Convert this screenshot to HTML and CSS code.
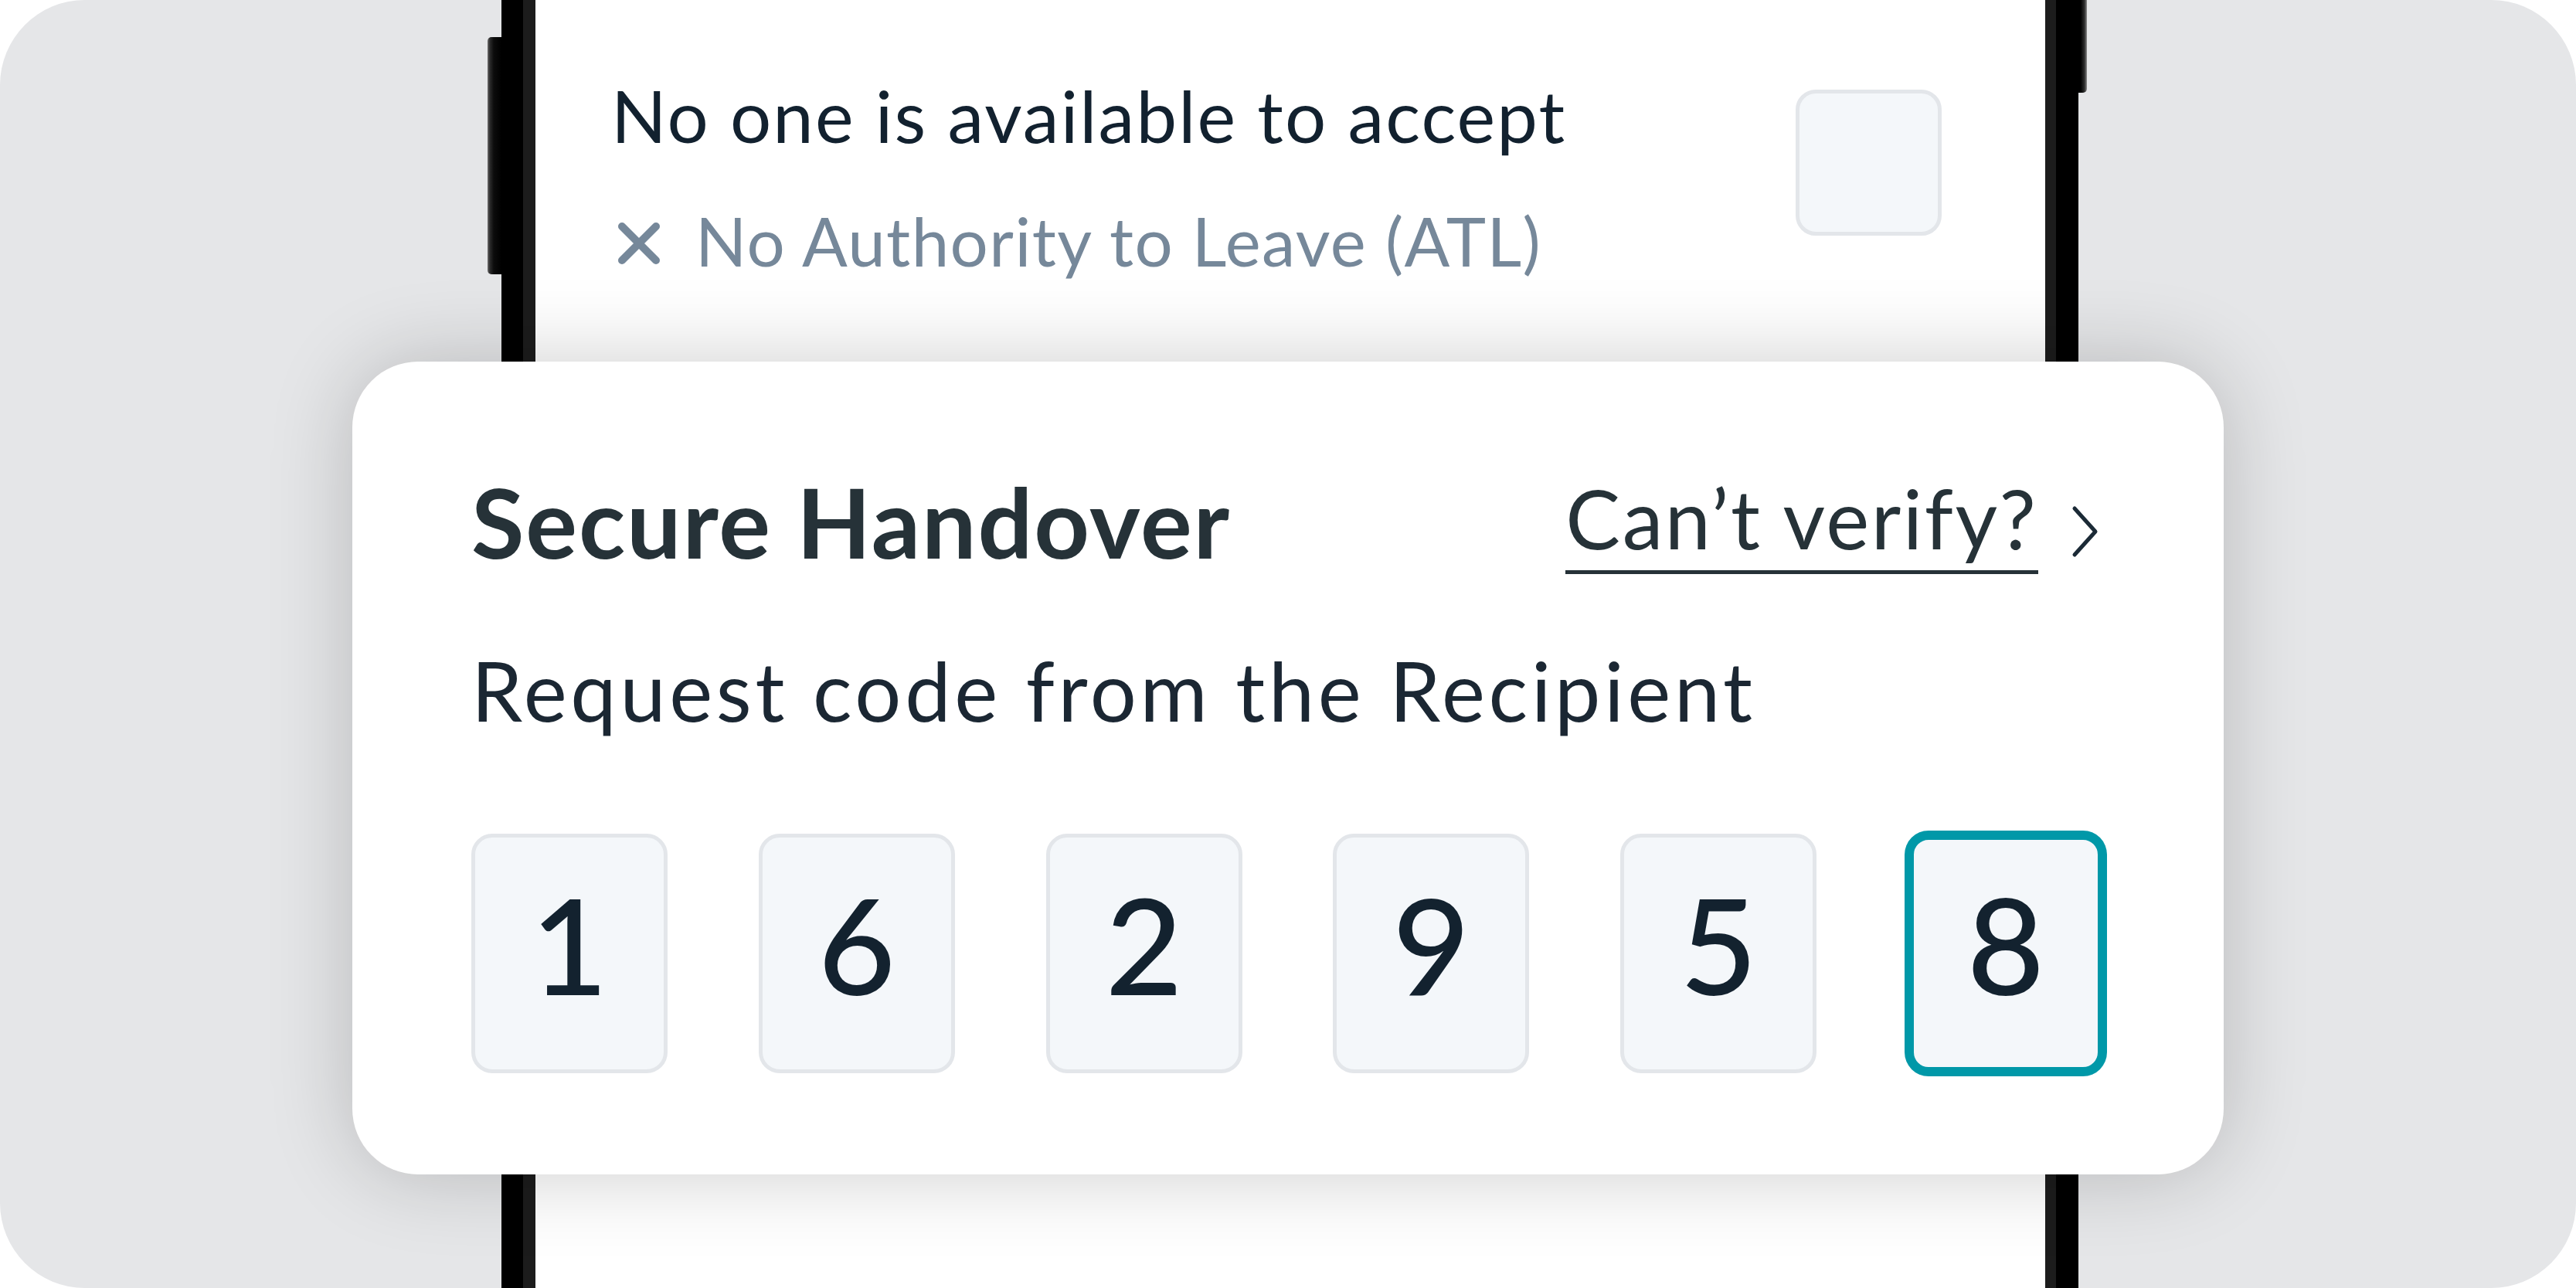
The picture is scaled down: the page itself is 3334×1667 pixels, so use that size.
FILE: index.html
```html
<!DOCTYPE html>
<html lang="en">
<head>
<meta charset="utf-8">
<title>Secure Handover</title>
<link rel="stylesheet" href="styles.css">
</head>
<body>
<div class="stage">
  <div class="phone">
    <div class="screen">
      <div class="option">
        <div class="option-text">
          <p class="option-title">No one is available to accept</p>
          <p class="option-note">
            <svg class="x-icon" viewBox="0 0 54 54" aria-hidden="true"><path d="M5 5 L49 49 M49 5 L5 49" fill="none" stroke="currentColor" stroke-width="10" stroke-linecap="round"/></svg>
            <span>No Authority to Leave (ATL)</span>
          </p>
        </div>
        <span class="checkbox"></span>
      </div>
    </div>
  </div>
  <section class="card">
    <header class="card-head">
      <h2 class="title">Secure Handover</h2>
      <a class="link" href="#">
        <span class="link-text">Can’t verify?</span>
        <svg class="chev" viewBox="0 0 44 72" aria-hidden="true"><polyline points="6,6 33,36 6,66" fill="none" stroke="currentColor" stroke-width="5" stroke-linecap="round" stroke-linejoin="round"/></svg>
      </a>
    </header>
    <p class="sub">Request code from the Recipient</p>
    <div class="code">
      <span class="digit">1</span>
      <span class="digit">6</span>
      <span class="digit">2</span>
      <span class="digit">9</span>
      <span class="digit">5</span>
      <span class="digit active">8</span>
    </div>
  </section>
</div>
</body>
</html>
```
FILE: styles.css
```css
html, body {
  margin: 0;
  padding: 0;
  background: #ffffff;
}
body {
  font-family: Lato, "Noto Sans", "Liberation Sans", sans-serif;
}
.stage {
  position: relative;
  width: 3334px;
  height: 1667px;
  border-radius: 110px;
  background: #e5e6e8;
  overflow: hidden;
}
.phone {
  position: relative;
  margin-left: 649px;
  width: 2041px;
  height: 100%;
  box-sizing: border-box;
  background: #000;
  padding: 0 29px 0 28px;
  display: flex;
}
.phone::before {
  content: "";
  position: absolute;
  left: -18px;
  top: 48px;
  width: 18px;
  height: 307px;
  border-radius: 5px 0 0 5px;
  background: linear-gradient(to right, #6e6e6e 0, #2c2c2c 3px, #0c0c0c 8px, #000 100%);
}
.phone::after {
  content: "";
  position: absolute;
  right: -11px;
  top: -10px;
  width: 11px;
  height: 130px;
  border-radius: 0 5px 5px 0;
  background: linear-gradient(to left, #8a8a8a 0, #303030 3px, #000 8px);
}
.screen {
  flex: 1;
  background: #fff;
  border-left: 16px solid #1c1c1c;
  border-right: 14px solid #1c1c1c;
  padding: 93px 134px 0 98px;
}
.option {
  display: flex;
  justify-content: space-between;
  align-items: flex-start;
}
.option-title {
  margin: 0;
  font-size: 94px;
  line-height: 1.2;
  letter-spacing: 2.1px;
  color: #12212f;
}
.option-note {
  margin: 54px 0 0;
  display: flex;
  align-items: center;
  font-size: 87px;
  line-height: 1.2;
  letter-spacing: 1.4px;
  color: #76889a;
}
.x-icon {
  width: 54px;
  height: 54px;
  margin-left: 9px;
  margin-right: 46px;
  margin-top: 6px;
  flex: none;
}
.checkbox {
  width: 189px;
  height: 189px;
  box-sizing: border-box;
  margin-top: 23px;
  border: 5px solid #e3e6ea;
  border-radius: 26px;
  background: #f4f7fa;
}
.card {
  position: absolute;
  left: 456px;
  top: 468px;
  width: 2422px;
  box-sizing: border-box;
  padding: 132px 155px 131px 154px;
  background: #fff;
  border-radius: 85px;
  box-shadow: 0 0 110px rgba(0, 0, 0, 0.2);
}
.card-head {
  display: flex;
  align-items: center;
  justify-content: space-between;
}
.title {
  margin: 0;
  font-size: 125px;
  font-weight: 700;
  line-height: 150px;
  letter-spacing: 1.9px;
  color: #263238;
}
.link {
  display: flex;
  align-items: center;
  font-size: 106px;
  line-height: 1.2;
  letter-spacing: 2.5px;
  color: #263238;
  text-decoration: none;
}
.link-text {
  border-bottom: 5px solid #263238;
  padding-bottom: 3px;
  margin-right: -2.5px;
}
.chev {
  width: 44px;
  height: 72px;
  margin-left: 44px;
  margin-top: 26px;
  color: #1b2a36;
  flex: none;
}
.sub {
  margin: 80px 0 0;
  font-size: 106px;
  line-height: 1.2;
  letter-spacing: 4.7px;
  color: #1b2733;
}
.code {
  display: flex;
  justify-content: space-between;
  margin-top: 122px;
}
.digit {
  width: 254px;
  height: 310px;
  box-sizing: border-box;
  border: 5px solid #e3e6ea;
  border-radius: 27px;
  background: #f4f7fa;
  display: flex;
  align-items: center;
  justify-content: center;
  padding-bottom: 24px;
  font-size: 173px;
  font-weight: 500;
  line-height: 1.2;
  color: #13222f;
}
.digit.active {
  border: 8px solid #0098a8;
  box-shadow: 0 0 0 4px #0098a8;
}
```
